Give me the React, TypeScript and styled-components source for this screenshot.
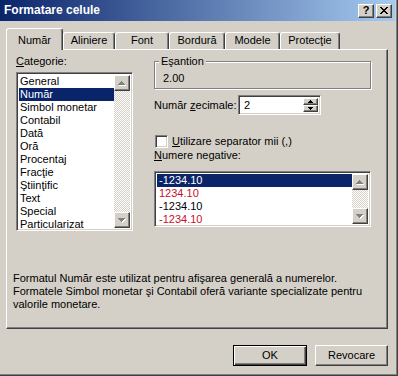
import React from "react";
import styled, { createGlobalStyle, css } from "styled-components";

const GlobalStyle = createGlobalStyle`
    html, body {
        margin: 0;
        padding: 0;
        background: #d4d0c8;
    }
    body {
        font-family: "Liberation Sans", Arial, sans-serif;
        font-size: 11px;
        line-height: 13px;
        color: #000;
    }
`;

const raised = css`
    box-sizing: border-box;
    border: 1px solid;
    border-color: #fff #404040 #404040 #fff;
    box-shadow: inset -1px -1px #808080, inset 1px 1px #d4d0c8;
    background: #d4d0c8;
`;

const sunken = css`
    box-sizing: border-box;
    border: 1px solid;
    border-color: #808080 #fff #fff #808080;
    box-shadow: inset 1px 1px #404040, inset -1px -1px #d4d0c8;
    background: #fff;
`;

const StyledWindow = styled.div`
    width: 398px;
    height: 376px;
    box-sizing: border-box;
    background: #d4d0c8;
    border-right: 1px solid #404040;
    border-bottom: 1px solid #404040;
    box-shadow: inset -1px -1px #808080;
    display: flex;
    flex-direction: column;
`;

const StyledTitleBar = styled.div`
    height: 21px;
    margin-right: 2px;
    padding: 0 3px 0 4px;
    background: linear-gradient(to right, #0a246a, #a6caf0);
    display: flex;
    align-items: center;
    justify-content: space-between;
`;

const StyledTitle = styled.div`
    color: #fff;
    font-weight: bold;
    font-size: 12px;
`;

const StyledTitleButtons = styled.div`
    display: flex;
    gap: 2px;
`;

const StyledCaptionButton = styled.div`
    ${raised};
    width: 16px;
    height: 14px;
    display: flex;
    align-items: center;
    justify-content: center;
    font-weight: bold;
    font-size: 11px;
    line-height: 11px;
`;

const StyledBody = styled.div`
    padding: 7px 9px 0 6px;
    display: flex;
    flex-direction: column;
`;

const StyledTabStrip = styled.div`
    height: 21px;
    display: flex;
    align-items: flex-end;
    position: relative;
    z-index: 1;
`;

const StyledTab = styled.div<{ $active?: boolean; $width: number }>`
    box-sizing: border-box;
    width: ${(p) => p.$width}px;
    height: ${(p) => (p.$active ? 22 : 17)}px;
    margin-bottom: ${(p) => (p.$active ? -1 : 0)}px;
    padding-top: ${(p) => (p.$active ? 5 : 1)}px;
    text-align: center;
    background: #d4d0c8;
    border-top: 1px solid #fff;
    border-left: 1px solid #fff;
    border-right: 1px solid #404040;
    box-shadow: inset -1px 0 #808080;
    border-radius: 3px 3px 0 0;
`;

const StyledPanel = styled.div`
    box-sizing: border-box;
    height: 280px;
    border: 1px solid;
    border-color: #fff #404040 #404040 #fff;
    box-shadow: inset -1px -1px #808080;
    padding: 5px 0 0 6px;
`;

const StyledUpper = styled.div`
    display: flex;
    gap: 21px;
    margin-left: 3px;
`;

const StyledColumn = styled.div<{ $width: number }>`
    width: ${(p) => p.$width}px;
    display: flex;
    flex-direction: column;
    position: relative;
`;

const StyledLabel = styled.div<{ $top?: number }>`
    margin-top: ${(p) => p.$top ?? 0}px;
    white-space: nowrap;
`;

const StyledListBox = styled.div<{ $height: number; $top: number }>`
    ${sunken};
    height: ${(p) => p.$height}px;
    margin-top: ${(p) => p.$top}px;
    display: flex;
    padding: 2px 2px 2px 2px;
    overflow: hidden;
`;

const StyledItems = styled.div`
    flex: 1;
    display: flex;
    flex-direction: column;
`;

const StyledItem = styled.div<{ $selected?: boolean; $red?: boolean; $pad: number }>`
    height: 13px;
    padding-left: ${(p) => p.$pad}px;
    white-space: nowrap;
    background: ${(p) => (p.$selected ? "#0a246a" : "transparent")};
    color: ${(p) => (p.$selected ? "#fff" : p.$red ? "#c8102e" : "#000")};
`;

const StyledScrollBar = styled.div`
    width: 16px;
    display: flex;
    flex-direction: column;
`;

const StyledScrollButton = styled.div`
    ${raised};
    width: 16px;
    height: 16px;
    display: flex;
    align-items: center;
    justify-content: center;
`;

const StyledTrack = styled.div`
    flex: 1;
    background: repeating-conic-gradient(#fff 0 25%, #d4d0c8 0 50%) 0 0 / 2px 2px;
`;

const StyledGroup = styled.div`
    box-sizing: border-box;
    margin-top: 6px;
    border: 1px solid #808080;
    box-shadow: inset 1px 1px #fff, 1px 1px #fff;
    padding: 10px 0 3px 8px;
`;

const StyledLegend = styled.div`
    position: absolute;
    top: 0;
    left: 5px;
    padding: 0 2px;
    background: #d4d0c8;
`;

const StyledFieldRow = styled.div<{ $top: number }>`
    margin-top: ${(p) => p.$top}px;
    display: flex;
    align-items: center;
`;

const StyledFieldLabel = styled.div`
    width: 84px;
    white-space: nowrap;
`;

const StyledSpinBox = styled.div`
    ${sunken};
    width: 83px;
    height: 20px;
    display: flex;
    align-items: center;
    padding: 2px 2px 2px 5px;
`;

const StyledSpinValue = styled.div`
    flex: 1;
`;

const StyledSpinButtons = styled.div`
    display: flex;
    flex-direction: column;
    align-self: stretch;
`;

const StyledSpinButton = styled.div`
    ${raised};
    width: 15px;
    height: 8px;
    display: flex;
    align-items: center;
    justify-content: center;
`;

const StyledCheckbox = styled.div`
    ${sunken};
    width: 13px;
    height: 13px;
    margin-left: 1px;
    margin-right: 4px;
`;

const StyledDescription = styled.div`
    margin-top: 41px;
    white-space: nowrap;
`;

const StyledFooter = styled.div`
    margin-top: 16px;
    display: flex;
    justify-content: flex-end;
    gap: 8px;
`;

const StyledButton = styled.div<{ $default?: boolean; $width: number }>`
    ${raised};
    width: ${(p) => p.$width}px;
    height: 21px;
    display: flex;
    align-items: center;
    justify-content: center;
    ${(p) =>
        p.$default &&
        css`
            border: 1px solid #000;
            box-shadow: inset 1px 1px #fff, inset -1px -1px #404040, inset -2px -2px #808080;
        `}
`;

const UP7 = "M3 0h1v1h1v1h1v1h1v1H0V3h1V2h1V1h1z";
const DOWN7 = "M0 0h7v1H6v1H5v1H4v1H3V3H2V2H1V1H0z";
const UP5 = "M2 0h1v1h1v1h1v1H0V2h1V1h1z";
const DOWN5 = "M0 0h5v1H4v1H3v1H2V2H1V1H0z";

function DisabledArrow({ down }: { down?: boolean }) {
    const d = down ? DOWN7 : UP7;
    return (
        <svg width="8" height="5" viewBox="0 0 8 5" shapeRendering="crispEdges">
            <path d={d} fill="#fff" transform="translate(1 1)" />
            <path d={d} fill="#808080" />
        </svg>
    );
}

function SpinArrow({ down }: { down?: boolean }) {
    return (
        <svg width="5" height="3" viewBox="0 0 5 3" shapeRendering="crispEdges">
            <path d={down ? DOWN5 : UP5} fill="#000" />
        </svg>
    );
}

function CloseIcon() {
    const rows: [number, number][][] = [
        [[0, 2], [6, 2]],
        [[1, 2], [5, 2]],
        [[2, 4]],
        [[3, 2]],
        [[2, 4]],
        [[1, 2], [5, 2]],
        [[0, 2], [6, 2]],
    ];
    return (
        <svg width="8" height="7" viewBox="0 0 8 7" shapeRendering="crispEdges">
            {rows.map((row, y) =>
                row.map(([x, w]) => <rect key={`${y}-${x}`} x={x} y={y} width={w} height={1} fill="#000" />)
            )}
        </svg>
    );
}

function ScrollBar() {
    return (
        <StyledScrollBar>
            <StyledScrollButton>
                <DisabledArrow />
            </StyledScrollButton>
            <StyledTrack />
            <StyledScrollButton>
                <DisabledArrow down />
            </StyledScrollButton>
        </StyledScrollBar>
    );
}

const tabs = [
    { label: "Număr", width: 57, active: true },
    { label: "Aliniere", width: 52 },
    { label: "Font", width: 54 },
    { label: "Bordură", width: 56 },
    { label: "Modele", width: 55 },
    { label: "Protecţie", width: 60 },
];

const categories = [
    "General",
    "Număr",
    "Simbol monetar",
    "Contabil",
    "Dată",
    "Oră",
    "Procentaj",
    "Fracţie",
    "Ştiinţific",
    "Text",
    "Special",
    "Particularizat",
];

const negatives = [
    { text: "-1234.10", red: false },
    { text: "1234.10", red: true },
    { text: "-1234.10", red: false },
    { text: "-1234.10", red: true },
];

export default function App() {
    return (
        <>
            <GlobalStyle />
            <StyledWindow>
                <StyledTitleBar>
                    <StyledTitle>Formatare celule</StyledTitle>
                    <StyledTitleButtons>
                        <StyledCaptionButton>?</StyledCaptionButton>
                        <StyledCaptionButton>
                            <CloseIcon />
                        </StyledCaptionButton>
                    </StyledTitleButtons>
                </StyledTitleBar>

                <StyledBody>
                    <StyledTabStrip>
                        {tabs.map((tab) => (
                            <StyledTab key={tab.label} $active={tab.active} $width={tab.width}>
                                {tab.label}
                            </StyledTab>
                        ))}
                    </StyledTabStrip>

                    <StyledPanel>
                        <StyledUpper>
                            <StyledColumn $width={117}>
                                <StyledLabel>
                                    <u>C</u>ategorie:
                                </StyledLabel>
                                <StyledListBox $height={159} $top={4}>
                                    <StyledItems>
                                        {categories.map((c) => (
                                            <StyledItem key={c} $selected={c === "Număr"} $pad={1}>
                                                {c}
                                            </StyledItem>
                                        ))}
                                    </StyledItems>
                                    <ScrollBar />
                                </StyledListBox>
                            </StyledColumn>

                            <StyledColumn $width={217}>
                                <StyledGroup>
                                    2.00
                                </StyledGroup>
                                <StyledLegend>Eşantion</StyledLegend>

                                <StyledFieldRow $top={6}>
                                    <StyledFieldLabel>
                                        Număr <u>z</u>ecimale:
                                    </StyledFieldLabel>
                                    <StyledSpinBox>
                                        <StyledSpinValue>2</StyledSpinValue>
                                        <StyledSpinButtons>
                                            <StyledSpinButton>
                                                <SpinArrow />
                                            </StyledSpinButton>
                                            <StyledSpinButton>
                                                <SpinArrow down />
                                            </StyledSpinButton>
                                        </StyledSpinButtons>
                                    </StyledSpinBox>
                                </StyledFieldRow>

                                <StyledFieldRow $top={20}>
                                    <StyledCheckbox />
                                    <span>
                                        <u>U</u>tilizare separator mii (,)
                                    </span>
                                </StyledFieldRow>

                                <StyledLabel $top={1}>
                                    <u>N</u>umere negative:
                                </StyledLabel>
                                <StyledListBox $height={56} $top={9}>
                                    <StyledItems>
                                        {negatives.map((n, i) => (
                                            <StyledItem key={i} $selected={i === 0} $red={n.red} $pad={2}>
                                                {n.text}
                                            </StyledItem>
                                        ))}
                                    </StyledItems>
                                    <ScrollBar />
                                </StyledListBox>
                            </StyledColumn>
                        </StyledUpper>

                        <StyledDescription>
                            Formatul Număr este utilizat pentru afişarea generală a numerelor.
                            <br />
                            Formatele Simbol monetar şi Contabil oferă variante specializate pentru
                            <br />
                            valorile monetare.
                        </StyledDescription>
                    </StyledPanel>

                    <StyledFooter>
                        <StyledButton $default $width={74}>
                            OK
                        </StyledButton>
                        <StyledButton $width={73}>Revocare</StyledButton>
                    </StyledFooter>
                </StyledBody>
            </StyledWindow>
        </>
    );
}
